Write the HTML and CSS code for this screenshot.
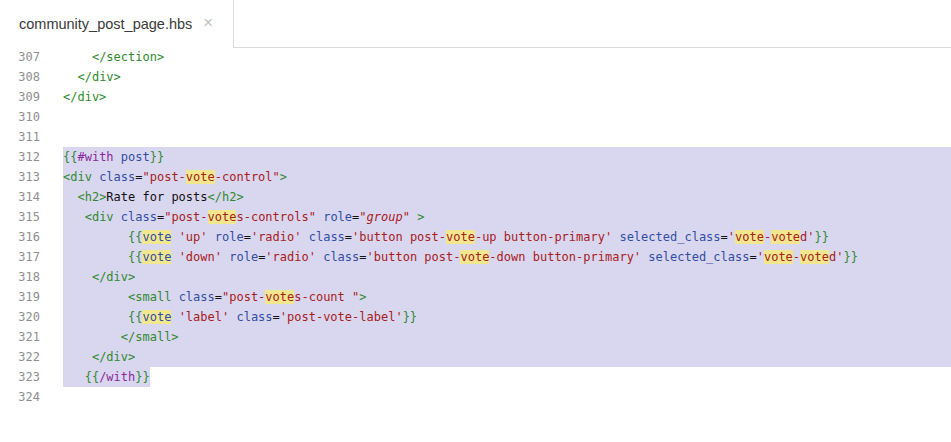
FILE: index.html
```html
<!DOCTYPE html>
<html>
<head>
<meta charset="utf-8">
<link rel="stylesheet" href="styles.css">
</head>
<body>
<div class="tabbar">
  <div class="tab"><span class="tab-name">community_post_page.hbs</span><span class="tab-close">×</span></div>
  <div class="tab-fill"></div>
</div>
<div class="editor">
  <div class="line"><span class="ln">307</span><span class="code">    <span class="t">&lt;/section&gt;</span></span></div>
  <div class="line"><span class="ln">308</span><span class="code">  <span class="t">&lt;/div&gt;</span></span></div>
  <div class="line"><span class="ln">309</span><span class="code"><span class="t">&lt;/div&gt;</span></span></div>
  <div class="line"><span class="ln">310</span><span class="code"></span></div>
  <div class="line"><span class="ln">311</span><span class="code"></span></div>
  <div class="line sel"><span class="ln">312</span><span class="code"><span class="t">{{</span><span class="k">#with</span> <span class="a">post</span><span class="t">}}</span></span></div>
  <div class="line sel"><span class="ln">313</span><span class="code"><span class="t">&lt;div</span> <span class="a">class</span>=<span class="s">"post-<span class="hl">vote</span>-control"</span><span class="t">&gt;</span></span></div>
  <div class="line sel"><span class="ln">314</span><span class="code">  <span class="t">&lt;h2&gt;</span>Rate for posts<span class="t">&lt;/h2&gt;</span></span></div>
  <div class="line sel"><span class="ln">315</span><span class="code">   <span class="t">&lt;div</span> <span class="a">class</span>=<span class="s">"post-<span class="hl">vote</span>s-controls"</span> <span class="a">role</span>=<span class="s">"<i>group</i>"</span> <span class="t">&gt;</span></span></div>
  <div class="line sel"><span class="ln">316</span><span class="code">         <span class="t">{{</span><span class="a hl">vote</span> <span class="s">'up'</span> <span class="a">role</span>=<span class="s">'radio'</span> <span class="a">class</span>=<span class="s">'button post-<span class="hl">vote</span>-up button-primary'</span> <span class="a">selected_class</span>=<span class="s">'<span class="hl">vote</span>-<span class="hl">vote</span>d'</span><span class="t">}}</span></span></div>
  <div class="line sel"><span class="ln">317</span><span class="code">         <span class="t">{{</span><span class="a hl">vote</span> <span class="s">'down'</span> <span class="a">role</span>=<span class="s">'radio'</span> <span class="a">class</span>=<span class="s">'button post-<span class="hl">vote</span>-down button-primary'</span> <span class="a">selected_class</span>=<span class="s">'<span class="hl">vote</span>-<span class="hl">vote</span>d'</span><span class="t">}}</span></span></div>
  <div class="line sel"><span class="ln">318</span><span class="code">    <span class="t">&lt;/div&gt;</span></span></div>
  <div class="line sel"><span class="ln">319</span><span class="code">         <span class="t">&lt;small</span> <span class="a">class</span>=<span class="s">"post-<span class="hl">vote</span>s-count "</span><span class="t">&gt;</span></span></div>
  <div class="line sel"><span class="ln">320</span><span class="code">         <span class="t">{{</span><span class="a hl">vote</span> <span class="s">'label'</span> <span class="a">class</span>=<span class="s">'post-vote-label'</span><span class="t">}}</span></span></div>
  <div class="line sel"><span class="ln">321</span><span class="code">        <span class="t">&lt;/small&gt;</span></span></div>
  <div class="line sel"><span class="ln">322</span><span class="code">    <span class="t">&lt;/div&gt;</span></span></div>
  <div class="line"><span class="ln">323</span><span class="code"><span class="part">   <span class="t">{{</span><span class="k">/with</span><span class="t">}}</span></span></span></div>
  <div class="line"><span class="ln">324</span><span class="code"></span></div>
</div>
</body>
</html>
```
FILE: styles.css
```css
html, body {
  margin: 0;
  padding: 0;
  background: #ffffff;
}
body {
  width: 951px;
  height: 442px;
  overflow: hidden;
}
.tabbar {
  display: flex;
  height: 48px;
}
.tab {
  width: 233px;
  display: flex;
  align-items: center;
  padding-left: 19px;
  box-sizing: border-box;
  font-family: "Liberation Sans", Arial, sans-serif;
  font-size: 14.5px;
  color: #3a3a3a;
}
.tab-name {
  padding-bottom: 1px;
}
.tab-close {
  margin-left: 11px;
  color: #c2c2c2;
  font-size: 17px;
  line-height: 1;
  padding-bottom: 3px;
}
.tab-fill {
  flex: 1;
  border-left: 1px solid #dcdcdc;
  border-bottom: 1px solid #dcdcdc;
}
.editor {
  margin-top: -1px;
  font-family: "DejaVu Sans Mono", monospace;
  font-size: 12px;
}
.line {
  display: flex;
  height: 20px;
  line-height: 20px;
  white-space: pre;
}
.ln {
  width: 40px;
  text-align: right;
  color: #8f8f8f;
  flex: none;
}
.code {
  margin-left: 23px;
  flex: 1;
  color: #111;
}
.sel .code {
  background: #d9d6f0;
}
.part {
  display: block;
  width: max-content;
  background: #d9d6f0;
}
.t { color: #2f8a2f; }
.a { color: #2f4ea3; }
.s { color: #a8201a; }
.k { color: #8a2a9a; }
.hl { background: #f2e78f; }
```
